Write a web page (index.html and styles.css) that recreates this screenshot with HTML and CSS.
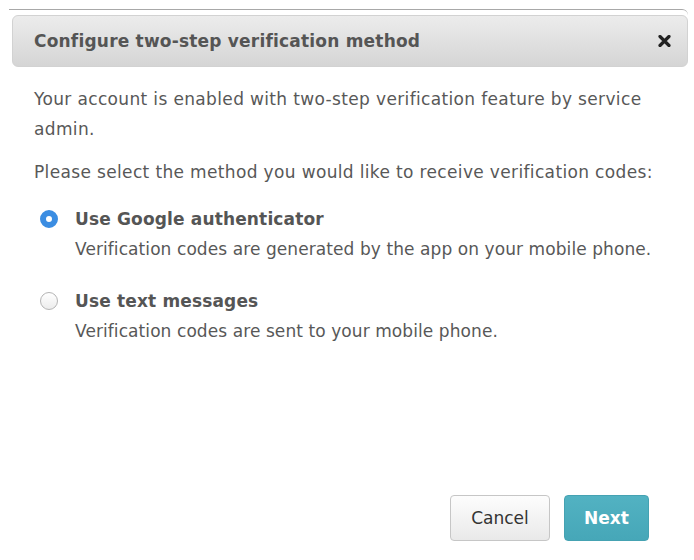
FILE: index.html
```html
<!DOCTYPE html>
<html>
<head>
    <title>Configure two-step verification method</title>
    <link rel="stylesheet" href="styles.css">
</head>
<body>
    <div class="modal">
        <div class="modal-header">
            <h3>Configure two-step verification method</h3>
            <svg class="close" width="13" height="12" viewBox="0 0 13 12">
                <path d="M2 1.5 L11 10.5 M11 1.5 L2 10.5" stroke="#222" stroke-width="3.2" stroke-linecap="round"/>
            </svg>
        </div>

        <div class="modal-body">
            <p class="intro">Your account is enabled with two-step verification feature by service admin.</p>
            <p class="prompt">Please select the method you would like to receive verification codes:</p>

            <label class="option">
                <span class="radio checked"></span>
                <span class="option-text">
                    <strong>Use Google authenticator</strong>
                    <span>Verification codes are generated by the app on your mobile phone.</span>
                </span>
            </label>

            <label class="option">
                <span class="radio"></span>
                <span class="option-text">
                    <strong>Use text messages</strong>
                    <span>Verification codes are sent to your mobile phone.</span>
                </span>
            </label>
        </div>

        <div class="modal-footer">
            <button class="btn btn-cancel">Cancel</button>
            <button class="btn btn-primary">Next</button>
        </div>
    </div>
</body>
</html>
```

FILE: styles.css
```css
body {
    margin: 0;
    background: #fff;
    font-family: "DejaVu Sans", Verdana, sans-serif;
    color: #585858;
}
.modal {
    margin: 9px 6px 0 9px;
    border-top: 1px solid #a8a8a8;
    border-top-right-radius: 6px;
    height: 551px;
    padding: 5px 0 0 3px;
    box-sizing: border-box;
    display: flex;
    flex-direction: column;
}
.modal-header {
    display: flex;
    align-items: center;
    justify-content: space-between;
    height: 52px;
    padding: 0 16px 0 21px;
    border: 1px solid #d2d2d2;
    border-radius: 6px;
    background: linear-gradient(#ececec, #d5d5d5);
    box-sizing: border-box;
}
.modal-header h3 {
    margin: 0;
    font-size: 17px;
    font-weight: bold;
    letter-spacing: 0.2px;
    color: #555;
}
.close {
    display: block;
}
.modal-body {
    padding: 17px 22px 0 22px;
    flex: 1;
}
.modal-body p {
    margin: 0;
    font-size: 17px;
    line-height: 30px;
    letter-spacing: 0.35px;
}
.prompt {
    margin-top: 13px !important;
}
.option {
    display: flex;
    align-items: flex-start;
    margin: 17px 0 0 6px;
}
.option + .option {
    margin-top: 22px;
}
.radio {
    width: 18px;
    height: 18px;
    margin: 6px 17px 0 0;
    border-radius: 50%;
    border: 1px solid #b4b4b4;
    background: linear-gradient(#fff, #ececec);
    box-sizing: border-box;
    flex-shrink: 0;
}
.radio.checked {
    border: 6px solid #3b8de2;
    background: #fff;
}
.option-text {
    display: flex;
    flex-direction: column;
    font-size: 17px;
    line-height: 30px;
    letter-spacing: 0.08px;
}
.option-text strong {
    letter-spacing: 0.15px;
    color: #555;
}
.modal-footer {
    display: flex;
    justify-content: flex-end;
    gap: 14px;
    padding: 0 39px 19px 0;
}
.btn {
    height: 46px;
    border-radius: 4px;
    font-family: "DejaVu Sans", Verdana, sans-serif;
    font-size: 17px;
}
.btn-cancel {
    width: 100px;
    border: 1px solid #c6c6c6;
    background: linear-gradient(#fdfdfd, #e9e9e9);
    color: #333;
}
.btn-primary {
    width: 85px;
    border: 1px solid #45a2b2;
    background: linear-gradient(#52b2c2, #46a7b8);
    color: #fff;
    font-weight: bold;
}
```
